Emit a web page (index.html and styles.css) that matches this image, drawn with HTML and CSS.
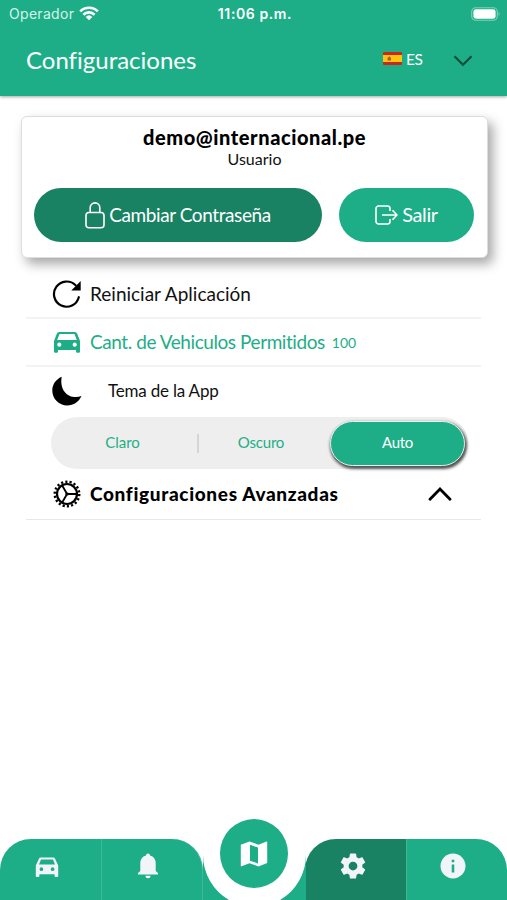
FILE: index.html
```html
<!DOCTYPE html>
<html lang="es">
<head>
    <meta charset="UTF-8">
    <meta name="viewport" content="width=device-width, initial-scale=1.0">
    <title>Configuraciones</title>
    <link rel="stylesheet" href="styles.css">
</head>
<body>
    <header class="header">
        <div class="status-bar">
            <div class="carrier">
                <span>Operador</span>
                <svg width="20" height="15" viewBox="0 0 20 15" fill="none" stroke="#fff" stroke-width="2.7">
                    <path d="M1.2 5.4a12.4 12.4 0 0 1 17.6 0M4.4 8.7a8 8 0 0 1 11.2 0"/>
                    <path d="M10 14.2L6.7 10.9a4.8 4.8 0 0 1 6.6 0z" fill="#fff" stroke="none"/>
                </svg>
            </div>
            <div class="clock">11:06 p.m.</div>
            <div class="battery">
                <svg width="30" height="14" viewBox="0 0 30 14">
                    <rect x=".7" y=".7" width="25.6" height="12.6" rx="4" fill="none" stroke="#7fd2b8" stroke-width="1.1"/>
                    <rect x="2.4" y="2.3" width="22.2" height="9.4" rx="2.4" fill="#fff"/>
                    <path d="M27.6 4.8q2 2.2 0 4.4z" fill="#7fd2b8"/>
                </svg>
            </div>
        </div>
        <div class="title-bar">
            <h1>Configuraciones</h1>
            <div class="language">
                <svg width="19" height="13" viewBox="0 0 19 13">
                    <rect width="19" height="13" rx="1" fill="#c8281e"/>
                    <rect y="3" width="19" height="7" fill="#fcc40f"/>
                    <path d="M4.5 8.6V6l1.7-1.8L8 6v2.6z" fill="#b5532a"/>
                </svg>
                <span>ES</span>
            </div>
            <svg class="chevron" width="20" height="12" viewBox="0 0 20 12" fill="none" stroke="#0d4d3a" stroke-width="2.2">
                <path d="M1.5 1.2l8.5 8.6 8.5-8.6"/>
            </svg>
        </div>
    </header>

    <main>
        <section class="card">
            <h2>demo@internacional.pe</h2>
            <p>Usuario</p>
            <div class="buttons">
                <button class="btn btn-password">
                    <svg width="20" height="27" viewBox="0 0 20 27" fill="none" stroke="#fff" stroke-width="1.6">
                        <rect x="1" y="10.5" width="18" height="15.3" rx="3"/>
                        <path d="M5.2 10.5V5.7a4.8 4.8 0 0 1 9.6 0v4.8"/>
                    </svg>
                    <span>Cambiar Contraseña</span>
                </button>
                <button class="btn btn-logout">
                    <svg width="23" height="20" viewBox="0 0 23 20" fill="none" stroke="#fff" stroke-width="1.6">
                        <path d="M15 6V3.5A2.5 2.5 0 0 0 12.5 1h-9A2.5 2.5 0 0 0 1 3.5v13A2.5 2.5 0 0 0 3.5 19h9a2.5 2.5 0 0 0 2.5-2.5V14M7 10h15M17.5 5.2L22 10l-4.5 4.8"/>
                    </svg>
                    <span>Salir</span>
                </button>
            </div>
        </section>

        <section class="settings">
            <div class="row">
                <svg class="row-icon" width="30" height="30" viewBox="0 0 30 30">
                    <path d="M26.800 18.200A12.600 12.600 0 1 1 23.600 6.300" fill="none" stroke="#000" stroke-width="2.200" stroke-linecap="round"/>
                    <path d="M28.700 2v9.500h-9.400z"/>
                </svg>
                <span class="label label-reset">Reiniciar Aplicación</span>
            </div>
            <div class="row row-green">
                <svg class="row-icon" width="30" height="30" viewBox="0 0 30 30" fill="#1dae87">
                    <path fill-rule="evenodd" d="M7.200 5h15.600q1.700 0 2.300 1.600L28 14v10.500q0 1.200-1.200 1.200h-1.600q-1.200 0-1.200-1.200V23H6v1.500q0 1.200-1.200 1.200H3.200Q2 25.700 2 24.500V14l2.900-7.400Q5.500 5 7.200 5zm.3 2L5.200 13h19.600L22.500 7zM7.300 15.600a2.100 2.100 0 1 0 0 4.200 2.100 2.100 0 0 0 0-4.200zm15.400 0a2.100 2.100 0 1 0 0 4.200 2.100 2.100 0 0 0 0-4.200z"/>
                </svg>
                <span class="label label-vehicles">Cant. de Vehiculos Permitidos</span>
                <span class="count">100</span>
            </div>
            <div class="theme">
                <div class="theme-title">
                    <svg class="row-icon" width="30" height="30" viewBox="0 0 30 30">
                        <path d="M9.700.7C3.800 3.300.3 8.400.3 14.500a14.900 14.900 0 0 0 14.900 15c6.400 0 11.700-3.500 14.300-9.400C18.700 24 7 16.500 9.700.7z"/>
                    </svg>
                    <span>Tema de la App</span>
                </div>
                <div class="segment">
                    <div class="option">Claro</div>
                    <div class="divider"></div>
                    <div class="option option-dark">Oscuro</div>
                    <div class="option active">Auto</div>
                </div>
            </div>
            <div class="row row-advanced">
                <svg class="row-icon" width="30" height="30" viewBox="0 0 30 30" fill="none" stroke="#000">
                    <circle cx="15" cy="15" r="12.300" stroke-width="2.400" stroke-dasharray="2.200 2.094"/>
                    <circle cx="15" cy="15" r="10" stroke-width="2.200"/>
                    <circle cx="15" cy="15" r="1" stroke-width="1.500"/>
                    <path d="M16 15h9M14.500 14l-4.600-8M14.500 16l-4.600 8" stroke-width="1.800"/>
                </svg>
                <span class="label label-advanced">Configuraciones Avanzadas</span>
                <svg class="arrow" width="24" height="14" viewBox="0 0 24 14" fill="none" stroke="#000" stroke-width="2.800" stroke-linecap="round">
                    <path d="M2 12.300L12 2l10 10.300"/>
                </svg>
            </div>
        </section>
    </main>

    <nav class="tabs">
        <div class="tab tab-left">
            <svg width="24" height="24" viewBox="0 0 30 30" fill="#f1f5f9">
                <path fill-rule="evenodd" d="M7.200 3h15.600q1.700 0 2.300 1.600L29 13v13.200q0 1.200-1.200 1.200h-2.100q-1.200 0-1.200-1.200V24h-19v2.200q0 1.200-1.200 1.200H2.200Q1 27.400 1 26.200V13l3.900-8.400Q5.500 3 7.200 3zm.3 2.500L5 12h20l-2.500-6.500zM8 15.400a2.300 2.300 0 1 0 0 4.600 2.300 2.300 0 0 0 0-4.600zm14 0a2.300 2.300 0 1 0 0 4.600 2.300 2.300 0 0 0 0-4.600z"/>
            </svg>
        </div>
        <div class="tab tab-bell">
            <svg width="22" height="26" viewBox="0 0 22 26" fill="#f1f5f9">
                <path d="M11 .5a2 2 0 0 1 2 2q5.700 1.300 5.700 8.300V18l2.300 2v1.500H1V20l2.300-2v-7.200q0-7 5.700-8.300a2 2 0 0 1 2-2zM8.500 22.800h5a2.500 2.500 0 0 1-5 0z"/>
            </svg>
        </div>
        <div class="tab-center">
            <svg width="103" height="61" viewBox="0 0 103 61">
                <path d="M0 16A51.500 52 0 0 0 26 61H0zM103 16A51.500 52 0 0 1 77 61h26z" fill="#1dae87"/>
            </svg>
            <div class="map-button">
                <svg width="28" height="28" viewBox="0 0 28 28">
                    <path fill="#fff" fill-rule="evenodd" d="M.8 4.700L9.500 1.500l9 3.200 8-3.100q.7-.2.700.6v20.900l-8.700 3.300-9-3.200-8 3.100q-.7.2-.7-.6zM10 4.800v15.900l8 2.800V7.600z"/>
                </svg>
            </div>
        </div>
        <div class="tab tab-settings">
            <svg width="30" height="30" viewBox="0 0 24 24" fill="#f1f5f9">
                <path d="M19.430 12.980c.040-.320.070-.640.070-.980s-.030-.660-.070-.980l2.110-1.650c.190-.150.240-.420.120-.640l-2-3.460c-.120-.220-.390-.300-.610-.220l-2.490 1c-.520-.400-1.080-.730-1.690-.980l-.380-2.650C14.460 2.180 14.250 2 14 2h-4c-.250 0-.460.180-.490.420l-.380 2.650c-.610.250-1.170.590-1.690.980l-2.490-1c-.230-.090-.490 0-.610.220l-2 3.460c-.130.220-.070.490.120.640l2.110 1.650c-.040.320-.070.650-.070.980s.030.660.070.980l-2.110 1.650c-.190.150-.240.420-.120.640l2 3.460c.120.220.390.300.610.220l2.490-1c.520.400 1.080.730 1.690.980l.380 2.650c.030.240.240.420.490.420h4c.250 0 .460-.180.490-.420l.380-2.650c.610-.250 1.170-.590 1.690-.980l2.490 1c.230.090.490 0 .610-.220l2-3.460c.120-.220.070-.490-.120-.640zM12 15.500a3.500 3.500 0 1 1 0-7 3.500 3.500 0 0 1 0 7z"/>
            </svg>
        </div>
        <div class="tab tab-right">
            <svg width="26" height="26" viewBox="0 0 26 26">
                <circle cx="13" cy="13" r="12.500" fill="#f1f5f9"/>
                <path d="M11.700 6.700h2.600v2.600h-2.600zM11.700 11.500h2.600v8h-2.600z" fill="#1dae87"/>
            </svg>
        </div>
    </nav>
</body>
</html>
```

FILE: styles.css
```css
body {
    display: flex;
    flex-direction: column;
    height: 900px;
    margin: 0;
    overflow: hidden;
    font-family: Lato, sans-serif;
    font-variant-ligatures: none;
    background: #fff;
    color: #111;
}
h1, h2, p {
    margin: 0;
    font-weight: normal;
}
svg {
    display: block;
    flex-shrink: 0;
}
.header {
    height: 96px;
    background: #1dae87;
    color: white;
    box-shadow: 0 1px 3px rgba(0, 0, 0, 0.35);
}
.status-bar {
    display: grid;
    grid-template-columns: 1fr 1fr 1fr;
    align-items: center;
    height: 27px;
    padding: 0 6px 0 9px;
    font-family: Inter, sans-serif;
    font-size: 14px;
}
.carrier {
    display: flex;
    align-items: center;
    gap: 5px;
    color: #d6f4e9;
    letter-spacing: 0.3px;
}
.clock {
    text-align: center;
    font-weight: 600;
    letter-spacing: 0.6px;
    white-space: nowrap;
}
.battery {
    display: flex;
    justify-content: flex-end;
}
.title-bar {
    display: flex;
    align-items: center;
    height: 66px;
    padding: 0 34px 0 26px;
}
.title-bar h1 {
    flex: 1;
    padding-bottom: 2px;
    font-size: 24px;
}
.language {
    display: flex;
    align-items: center;
    gap: 4px;
    width: 70px;
    font-size: 15.5px;
    line-height: 20px;
    padding-bottom: 3px;
    letter-spacing: -0.5px;
}
.chevron {
    margin-top: 2px;
}
.card {
    height: 142px;
    margin: 20px 19px 0 21px;
    box-sizing: border-box;
    border: 1px solid #ddd;
    border-radius: 6px;
    padding: 8px 12px 0;
    text-align: center;
    background: white;
    box-shadow: 5px 6px 12px rgba(0, 0, 0, 0.35);
}
.card h2 {
    font-size: 20px;
    font-weight: 900;
    line-height: 24px;
    letter-spacing: 0.57px;
    color: #000;
}
.card p {
    font-size: 16px;
    line-height: 20px;
}
.buttons {
    display: flex;
    gap: 17px;
    margin-top: 19px;
}
.btn {
    display: flex;
    align-items: center;
    justify-content: center;
    gap: 4px;
    height: 54px;
    padding: 0;
    border: none;
    border-radius: 27px;
    font-family: inherit;
    font-size: 20px;
    color: white;
}
.btn span {
    padding-bottom: 2px;
}
.btn-password {
    width: 288px;
    font-size: 19px;
    letter-spacing: -0.4px;
    background: #188262;
}
.btn-logout {
    width: 135px;
    letter-spacing: -0.4px;
    background: #1dae87;
}
.settings {
    margin: 13px 26px 0;
}
.row {
    display: flex;
    align-items: center;
    box-sizing: border-box;
    height: 48px;
    padding-left: 26px;
    border-bottom: 2px solid #f3f3f3;
    font-size: 19px;
}
.row-icon {
    margin-right: 8px;
}
.row-green {
    color: #1dae87;
}
.label {
    padding-bottom: 1px;
}
.label-vehicles {
    letter-spacing: -0.43px;
}
.count {
    margin-left: 7px;
    font-size: 14px;
}
.theme {
    padding: 9px 13px 0 26px;
}
.theme-title {
    display: flex;
    align-items: center;
    height: 30px;
    font-size: 17px;
    letter-spacing: -0.2px;
}
.theme-title span {
    margin-left: 18px;
    padding-bottom: 1px;
}
.segment {
    display: flex;
    align-items: center;
    box-sizing: border-box;
    height: 52px;
    margin: 11px 0 0 -1px;
    padding-right: 3px;
    border-radius: 26px;
    background: #eee;
    font-size: 15px;
    line-height: 20px;
    color: #1dae87;
}
.option {
    width: 143px;
    padding-bottom: 2px;
    text-align: center;
}
.option-dark {
    width: 124px;
    padding-right: 7px;
    letter-spacing: -0.2px;
}
.divider {
    width: 2px;
    height: 19px;
    margin-left: 3px;
    background: #d5d5d5;
}
.active {
    width: 133px;
    height: 43px;
    padding-bottom: 0;
    border: 1px solid #e5f1ed;
    border-radius: 24px;
    line-height: 40px;
    letter-spacing: -0.3px;
    color: white;
    background: #1dae87;
    box-shadow: 1px 2px 3px 1px rgba(0, 0, 0, 0.65);
}
.row-advanced {
    height: 51px;
    border-bottom-width: 1px;
    border-color: #e8e8e8;
    color: #000;
}
.label-advanced {
    flex: 1;
    padding-bottom: 2px;
    font-weight: 900;
    letter-spacing: 0.66px;
}
.arrow {
    margin-right: 29px;
}
.tabs {
    display: flex;
    height: 61px;
    margin-top: auto;
}
.tab {
    display: flex;
    justify-content: center;
    box-sizing: border-box;
    width: 101px;
    padding-top: 14px;
    background: #1dae87;
}
.tab-left {
    width: 102px;
    padding: 16px 7px 0 0;
    border-right: 1px solid #40b997;
    border-radius: 31px 0 0 0;
}
.tab-bell {
    padding-right: 9px;
    border-right: 1px solid #40b997;
    border-radius: 0 31px 0 0;
}
.tab-center {
    position: relative;
    width: 102px;
}
.map-button {
    position: absolute;
    left: 17px;
    top: -20px;
    display: flex;
    align-items: center;
    justify-content: center;
    width: 68px;
    height: 69px;
    border-radius: 50%;
    background: #1dae87;
}
.tab-settings {
    padding: 12px 6px 0 0;
    border-radius: 31px 0 0 0;
    background: #188262;
}
.tab-right {
    padding-right: 8px;
    border-left: 1px solid #40b997;
    border-radius: 0 31px 0 0;
}
```
